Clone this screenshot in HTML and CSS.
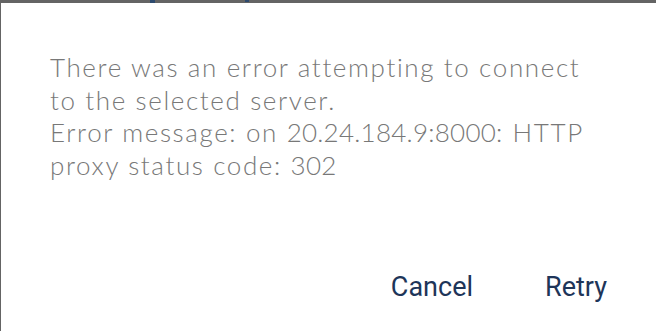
FILE: index.html
```html
<!DOCTYPE html>
<html>
<head>
<meta charset="utf-8">
<link rel="stylesheet" href="styles.css">
</head>
<body>
<div class="backdrop">
  <span class="peek peek-a"></span>
  <span class="peek peek-b"></span>
</div>
<div class="dialog">
  <div class="message">
    <p>There was an error attempting to connect<br>to the selected server.</p>
    <p>Error message: on <span class="num">20.24.184.9:8000</span>: HTTP<br>proxy status code: <span class="num">302</span></p>
  </div>
  <div class="actions">
    <button class="btn">Cancel</button>
    <button class="btn">Retry</button>
  </div>
</div>
</body>
</html>
```
FILE: styles.css
```css
html, body {
  margin: 0;
  padding: 0;
  width: 656px;
  height: 331px;
  overflow: hidden;
  background: #646464;
}
.backdrop {
  position: absolute;
  top: 0;
  left: 0;
  width: 656px;
  height: 3px;
}
.peek {
  position: absolute;
  top: 0;
  height: 3px;
  background: #2d4a6e;
}
.peek-a { left: 150px; width: 5px; }
.peek-b { left: 245px; width: 4px; height: 2px; }
.dialog {
  margin: 3px 0 0 1px;
  height: 328px;
  background: #fff;
  box-sizing: border-box;
  padding: 48px 49px 0 49px;
  display: flex;
  flex-direction: column;
}
.message {
  font-family: Lato, "Open Sans", sans-serif;
  font-weight: 300;
  font-size: 26px;
  letter-spacing: 1.62px;
  line-height: 32.5px;
  color: #787878;
  white-space: nowrap;
}
.message p { margin: 0; }
.num { letter-spacing: 0.25px; }
.actions {
  margin-top: 90px;
  display: flex;
  justify-content: flex-end;
  gap: 72px;
}
.btn {
  font-family: Roboto, sans-serif;
  font-size: 27px;
  color: #1e3559;
  background: none;
  border: 0;
  padding: 0;
  line-height: 32px;
}
```
